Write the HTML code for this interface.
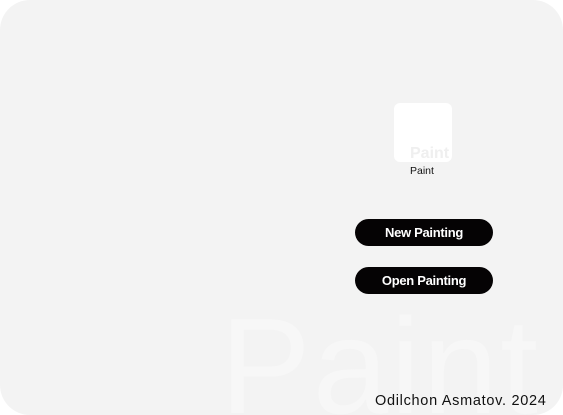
<!DOCTYPE html>
<html><head><style>
html,body{margin:0;padding:0;background:#fff;width:563px;height:415px;overflow:hidden;font-family:"Liberation Sans",sans-serif}
.panel{position:absolute;left:0;top:0;width:563px;height:415px;background:#f3f3f3;border-radius:30px;overflow:hidden}
.wm{position:absolute;left:220px;top:298px;font-size:136px;color:#f7f7f7;line-height:1;letter-spacing:2px;height:117px;overflow:hidden}
.icon{position:absolute;left:394px;top:103px;width:58px;height:59px;background:#fff;border-radius:6px;overflow:hidden}
.icon span{position:absolute;left:16px;top:42px;font-size:16px;color:#efefef;font-weight:bold}
.lbl{position:absolute;left:410px;top:165px;font-size:10.5px;color:#111}
.btn{position:absolute;left:355px;width:138px;height:27px;background:#050304;border-radius:14px;color:#fff;font-size:13px;font-weight:bold;text-align:center;line-height:27px;letter-spacing:-0.3px}
.ft{position:absolute;left:375px;top:393px;font-size:14.5px;color:#111;letter-spacing:0.7px}
</style></head><body>
<div class="panel">
<div class="wm">Paint</div>
<div class="icon"><span>Paint</span></div>
<div class="lbl">Paint</div>
<div class="btn" style="top:219px">New Painting</div>
<div class="btn" style="top:267px">Open Painting</div>
<div class="ft">Odilchon Asmatov. 2024</div>
</div>
</body></html>
